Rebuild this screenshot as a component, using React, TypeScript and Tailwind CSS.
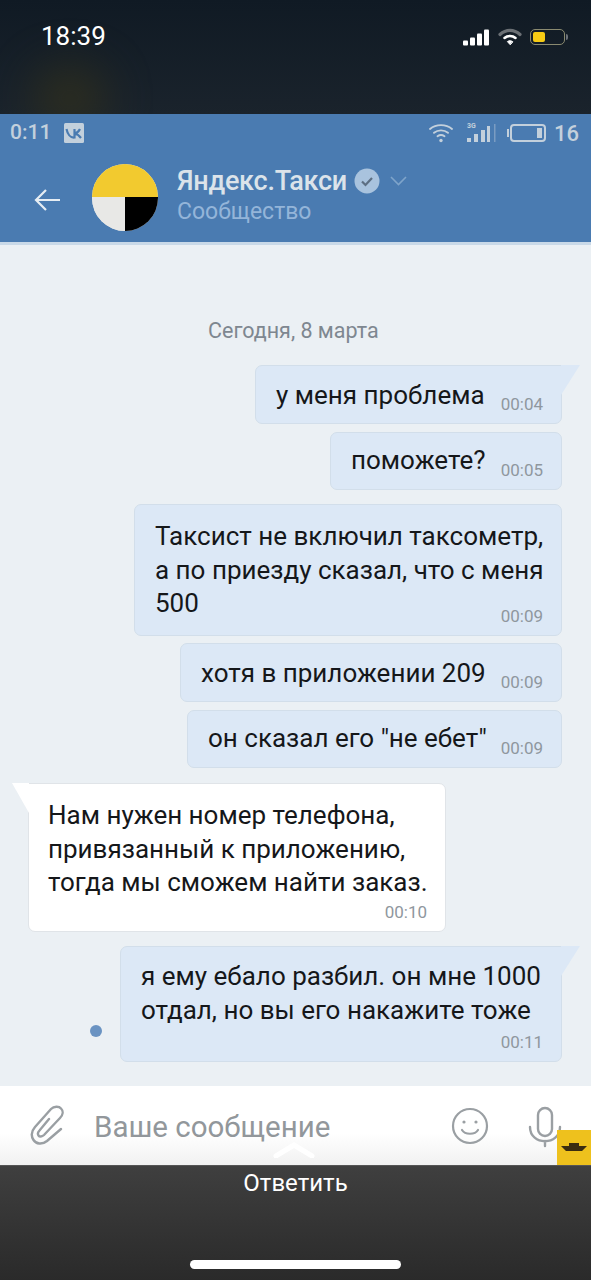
import React from 'react';

const Lines: React.FC<{ lines: string[] }> = ({ lines }) => (
  <div className="flex flex-col items-start text-[26px] leading-[33.5px] text-[#15171a]">
    {lines.map((line) => (
      <span key={line} className="whitespace-nowrap">{line}</span>
    ))}
  </div>
);

const Time: React.FC<{ children: string }> = ({ children }) => (
  <span className="absolute right-[18px] bottom-[10px] text-[17px] leading-[18px] text-[#8f979e]">{children}</span>
);

const Out: React.FC<{
  width: string;
  height: string;
  time: string;
  tail?: boolean;
  lines: string[];
  className: string;
}> = ({ width, height, time, tail, lines, className }) => (
  <div className={`relative self-end ${width} ${height} ${className} ${tail ? 'rounded-l-[7px] rounded-br-[7px]' : 'rounded-[7px]'} bg-[#dce8f6] border border-[#d2deea] pl-5`}>
    {tail && (
      <svg className="absolute top-[-1px] right-[-19px]" width="19" height="30" viewBox="0 0 19 30">
        <path d="M0 0 H19 L0 30 Z" fill="#dce8f6" />
      </svg>
    )}
    <Lines lines={lines} />
    <Time>{time}</Time>
  </div>
);

export default function App() {
  return (
    <div className="w-[591px] h-[1280px] overflow-hidden flex flex-col font-['Roboto',sans-serif] bg-[#ebf0f4]">
      {/* iphone status bar */}
      <div className="relative h-[114px] shrink-0 bg-gradient-to-b from-[#101a24] to-[#1a232c] pl-[41px] pr-[23px] pt-[19px] flex justify-between items-start overflow-hidden">
        <div className="absolute left-[35px] top-[68px] w-[70px] h-[60px] rounded-full bg-[#3a3518] opacity-70 blur-xl" />
        <span className="relative text-[26px] leading-[34px] text-white">18:39</span>
        <div className="relative flex items-center mt-[9px]">
          <svg width="26" height="17" viewBox="0 0 26 17" fill="#fff">
            <rect x="0" y="11.5" width="5" height="5" rx="1" />
            <rect x="7" y="8.5" width="5" height="8" rx="1" />
            <rect x="14" y="4.5" width="5" height="12" rx="1" />
            <rect x="21" y="0.5" width="5" height="16" rx="1" />
          </svg>
          <svg className="ml-[9px]" width="24" height="18" viewBox="0 0 24 18" fill="none" strokeLinecap="round">
            <path d="M2 6.5 C8 1 16 1 22 6.5" stroke="#6b7075" strokeWidth="3.2" />
            <path d="M6.5 10 C9.5 7.2 14.5 7.2 17.5 10" stroke="#fff" strokeWidth="2.5" />
            <path d="M12 16.5 L9.4 13.6 C10.8 12.4 13.2 12.4 14.6 13.6 Z" fill="#fff" stroke="#fff" strokeWidth="1" />
          </svg>
          <div className="relative ml-[8px] w-[35px] h-[16px] rounded-[5px] border border-[#8a8a70] p-[2px] mr-[3px]">
            <div className="w-[12px] h-full rounded-[2px] bg-[#f6cb14]" />
            <div className="absolute right-[-4px] top-[4px] w-[2px] h-[6px] rounded-r bg-[#6d7278]" />
          </div>
        </div>
      </div>

      {/* vk header */}
      <div className="h-[131px] shrink-0 bg-[#4a7bb1] border-b-[3px] border-[#c9d9e8]">
        <div className="h-[38px] pl-[10px] pr-[12px] flex items-center justify-between text-[#c3d0dc]">
          <div className="flex items-center gap-[13px]">
            <span className="text-[21px] font-medium">0:11</span>
            <svg width="20" height="20" viewBox="0 0 20 20">
              <rect width="20" height="20" rx="1.5" fill="#c3d0dc" />
              <path d="M2.5 6 C3.5 11 6.5 15 10.5 14.5 V6 M16 6 C15 8 13 10 10.5 10.5 C13.5 11 15.5 13 17 15" fill="none" stroke="#4a7bb1" strokeWidth="2.2" />
            </svg>
          </div>
          <div className="flex items-center">
            <svg width="24" height="20" viewBox="0 0 24 20" fill="none" stroke="#c3d0dc" strokeWidth="1.9" strokeLinecap="round">
              <path d="M1 6 C7 0.8 17 0.8 23 6" />
              <path d="M5 9.8 C9 6.5 15 6.5 19 9.8" />
              <path d="M8.5 13.2 C10.5 11.8 13.5 11.8 15.5 13.2" />
              <circle cx="12" cy="17.5" r="1.7" fill="#c3d0dc" stroke="none" />
            </svg>
            <svg className="ml-[13px]" width="31" height="22" viewBox="0 0 31 22" fill="#c3d0dc">
              <text x="1" y="6" fontSize="7" fontWeight="700">3G</text>
              <rect x="1" y="16" width="4" height="4" />
              <rect x="8" y="12" width="4" height="8" />
              <rect x="15" y="8" width="4" height="12" />
              <rect x="21" y="4" width="3" height="16" />
              <rect x="28" y="2" width="1.5" height="18" opacity="0.4" />
            </svg>
            <svg className="ml-[10px]" width="39" height="18" viewBox="0 0 39 18" fill="none">
              <rect x="4" y="1" width="34" height="16" rx="3" stroke="#c3d0dc" strokeWidth="2" />
              <rect x="30" y="4" width="5" height="10" fill="#c3d0dc" />
              <rect x="0" y="5" width="2" height="8" fill="#c3d0dc" />
            </svg>
            <span className="ml-[8px] text-[22px] font-medium">16</span>
          </div>
        </div>
        <div className="flex items-start pl-[33px]">
          <svg className="mt-[36px]" width="27" height="24" viewBox="0 0 27 24" fill="none" stroke="#e6edf3" strokeWidth="2.2">
            <path d="M27 12 H3 M13 2 L3 12 L13 22" />
          </svg>
          <div className="ml-[32px] w-[66px] h-[67px] mt-[12px] rounded-full overflow-hidden flex flex-col shrink-0 bg-[#e8e8e6]">
            <div className="h-[33px] bg-[#f2ca2f]" />
            <div className="h-[34px] flex">
              <div className="w-1/2 bg-[#e8e8e6]" />
              <div className="w-1/2 bg-black" />
            </div>
          </div>
          <div className="ml-[19px] mt-[11px]">
            <div className="flex items-center">
              <span className="text-[27px] leading-[36px] font-medium text-[#dbe3ea] tracking-[-0.25px]">Яндекс.Такси</span>
              <svg className="ml-[7px]" width="26" height="26" viewBox="0 0 26 26">
                <circle cx="13" cy="13" r="12.5" fill="#a9c3de" />
                <path d="M8 13.5 L11.5 17 L18 10" fill="none" stroke="#5d6f83" strokeWidth="2.2" />
              </svg>
              <svg className="ml-[10px]" width="17" height="10" viewBox="0 0 17 10" fill="none" stroke="#7fa4ca" strokeWidth="1.6">
                <path d="M1 1 L8.5 8.5 L16 1" />
              </svg>
            </div>
            <div className="text-[23px] leading-[24px] mt-[1px] text-[#94b5d9]">Сообщество</div>
          </div>
        </div>
      </div>

      {/* chat */}
      <div className="flex-1 flex flex-col pr-[29px]">
        <div className="mt-[74px] ml-[208px] text-[21.5px] leading-[24px] text-[#7e8790]">Сегодня, 8 марта</div>
        <Out width="w-[307px]" height="h-[59px]" time="00:04" tail lines={['у меня проблема']} className="mt-[22px] pt-[13px]" />
        <Out width="w-[232px]" height="h-[58px]" time="00:05" lines={['поможете?']} className="mt-[8px] pt-[11px]" />
        <Out
          width="w-[428px]"
          height="h-[132px]"
          time="00:09"
          lines={['Таксист не включил таксометр,', 'а по приезду сказал, что с меня', '500']}
          className="mt-[14px] pt-[15px]"
        />
        <Out width="w-[382px]" height="h-[59px]" time="00:09" lines={['хотя в приложении 209']} className="mt-[7px] pt-[13px]" />
        <Out width="w-[375px]" height="h-[58px]" time="00:09" lines={['он сказал его "не ебет"']} className="mt-[8px] pt-[11px]" />
        <div className="relative mt-[15px] ml-[28px] w-[418px] h-[149px] rounded-r-[7px] rounded-bl-[7px] bg-white border border-[#e0e4e8] pl-[19px] pt-[15px]">
          <svg className="absolute top-[-1px] left-[-17px]" width="17" height="30" viewBox="0 0 17 30">
            <path d="M17 0 H0 L17 30 Z" fill="#fff" />
          </svg>
          <Lines lines={['Нам нужен номер телефона,', 'привязанный к приложению,', 'тогда мы сможем найти заказ.']} />
          <Time>00:10</Time>
        </div>
        <div className="relative mt-[14px] flex justify-end">
          <div className="absolute left-[90px] top-[79px] w-[12px] h-[12px] rounded-full bg-[#6a93c2]" />
          <Out
            width="w-[442px]"
            height="h-[116px]"
            time="00:11"
            tail
            lines={['я ему ебало разбил. он мне 1000', 'отдал, но вы его накажите тоже']}
            className="pt-[13px]"
          />
        </div>
      </div>

      {/* input */}
      <div className="relative h-[79px] shrink-0 bg-gradient-to-b from-white from-60% to-[#f1f1f1] flex items-start pl-[30px]">
        <svg className="mt-[19px]" width="34" height="40" viewBox="0 0 34 40" fill="none" stroke="#9a9fa3" strokeWidth="2.4" strokeLinecap="round">
          <path d="M31 24 L17 36 C12 40 6 39 3.5 35 C1 31 1.5 26 5 22 L21 4 C24 1 29 1 31 3.5 C33.5 6 33 10 30 13 L14 30 C12 32 9.5 32 8.5 30.5 C7.5 29 8 27 9.5 25.5 L19 14" />
        </svg>
        <span className="ml-[30px] mt-[22px] text-[29.5px] leading-[38px] text-[#92979b]">Ваше сообщение</span>
        <svg className="absolute left-[450px] top-[20px]" width="40" height="40" viewBox="0 0 40 40" fill="none" stroke="#9a9fa3" strokeWidth="2.2" strokeLinecap="round">
          <circle cx="20" cy="20" r="17" />
          <circle cx="14" cy="16" r="1.6" fill="#9a9fa3" stroke="none" />
          <circle cx="26" cy="16" r="1.6" fill="#9a9fa3" stroke="none" />
          <path d="M12 24 C15 29 25 29 28 24" />
        </svg>
        <svg className="absolute left-[527px] top-[20px]" width="36" height="42" viewBox="0 0 36 42" fill="none" stroke="#9a9fa3" strokeWidth="2.4" strokeLinecap="round">
          <rect x="11" y="2" width="14" height="28" rx="7" />
          <path d="M3 21 C3 40 33 40 33 21 M18 35 V40" />
        </svg>
        <div className="absolute left-[557px] top-[44px] w-[34px] h-[35px] bg-[#eec11d] flex items-center justify-center">
          <svg width="28" height="12" viewBox="0 0 28 12">
            <path d="M1 4 H27 L22 9 H6 Z M9 1 H19 V4 H9 Z" fill="#3a2c10" />
          </svg>
        </div>
        <svg className="absolute left-[273px] top-[56px]" width="42" height="16" viewBox="0 0 42 16" fill="none" stroke="#fff" strokeWidth="5" strokeLinecap="round">
          <path d="M3 14 L21 3 L39 14" />
        </svg>
      </div>

      {/* reply bar */}
      <div className="h-[115px] shrink-0 bg-gradient-to-b from-[#3f3f3f] to-[#2a2a2a] border-t border-[#555] flex flex-col items-center">
        <span className="mt-[2px] text-[24px] leading-[30px] text-white">Ответить</span>
        <div className="mt-[62px] w-[211px] h-[9px] rounded-full bg-white" />
      </div>
    </div>
  );
}
